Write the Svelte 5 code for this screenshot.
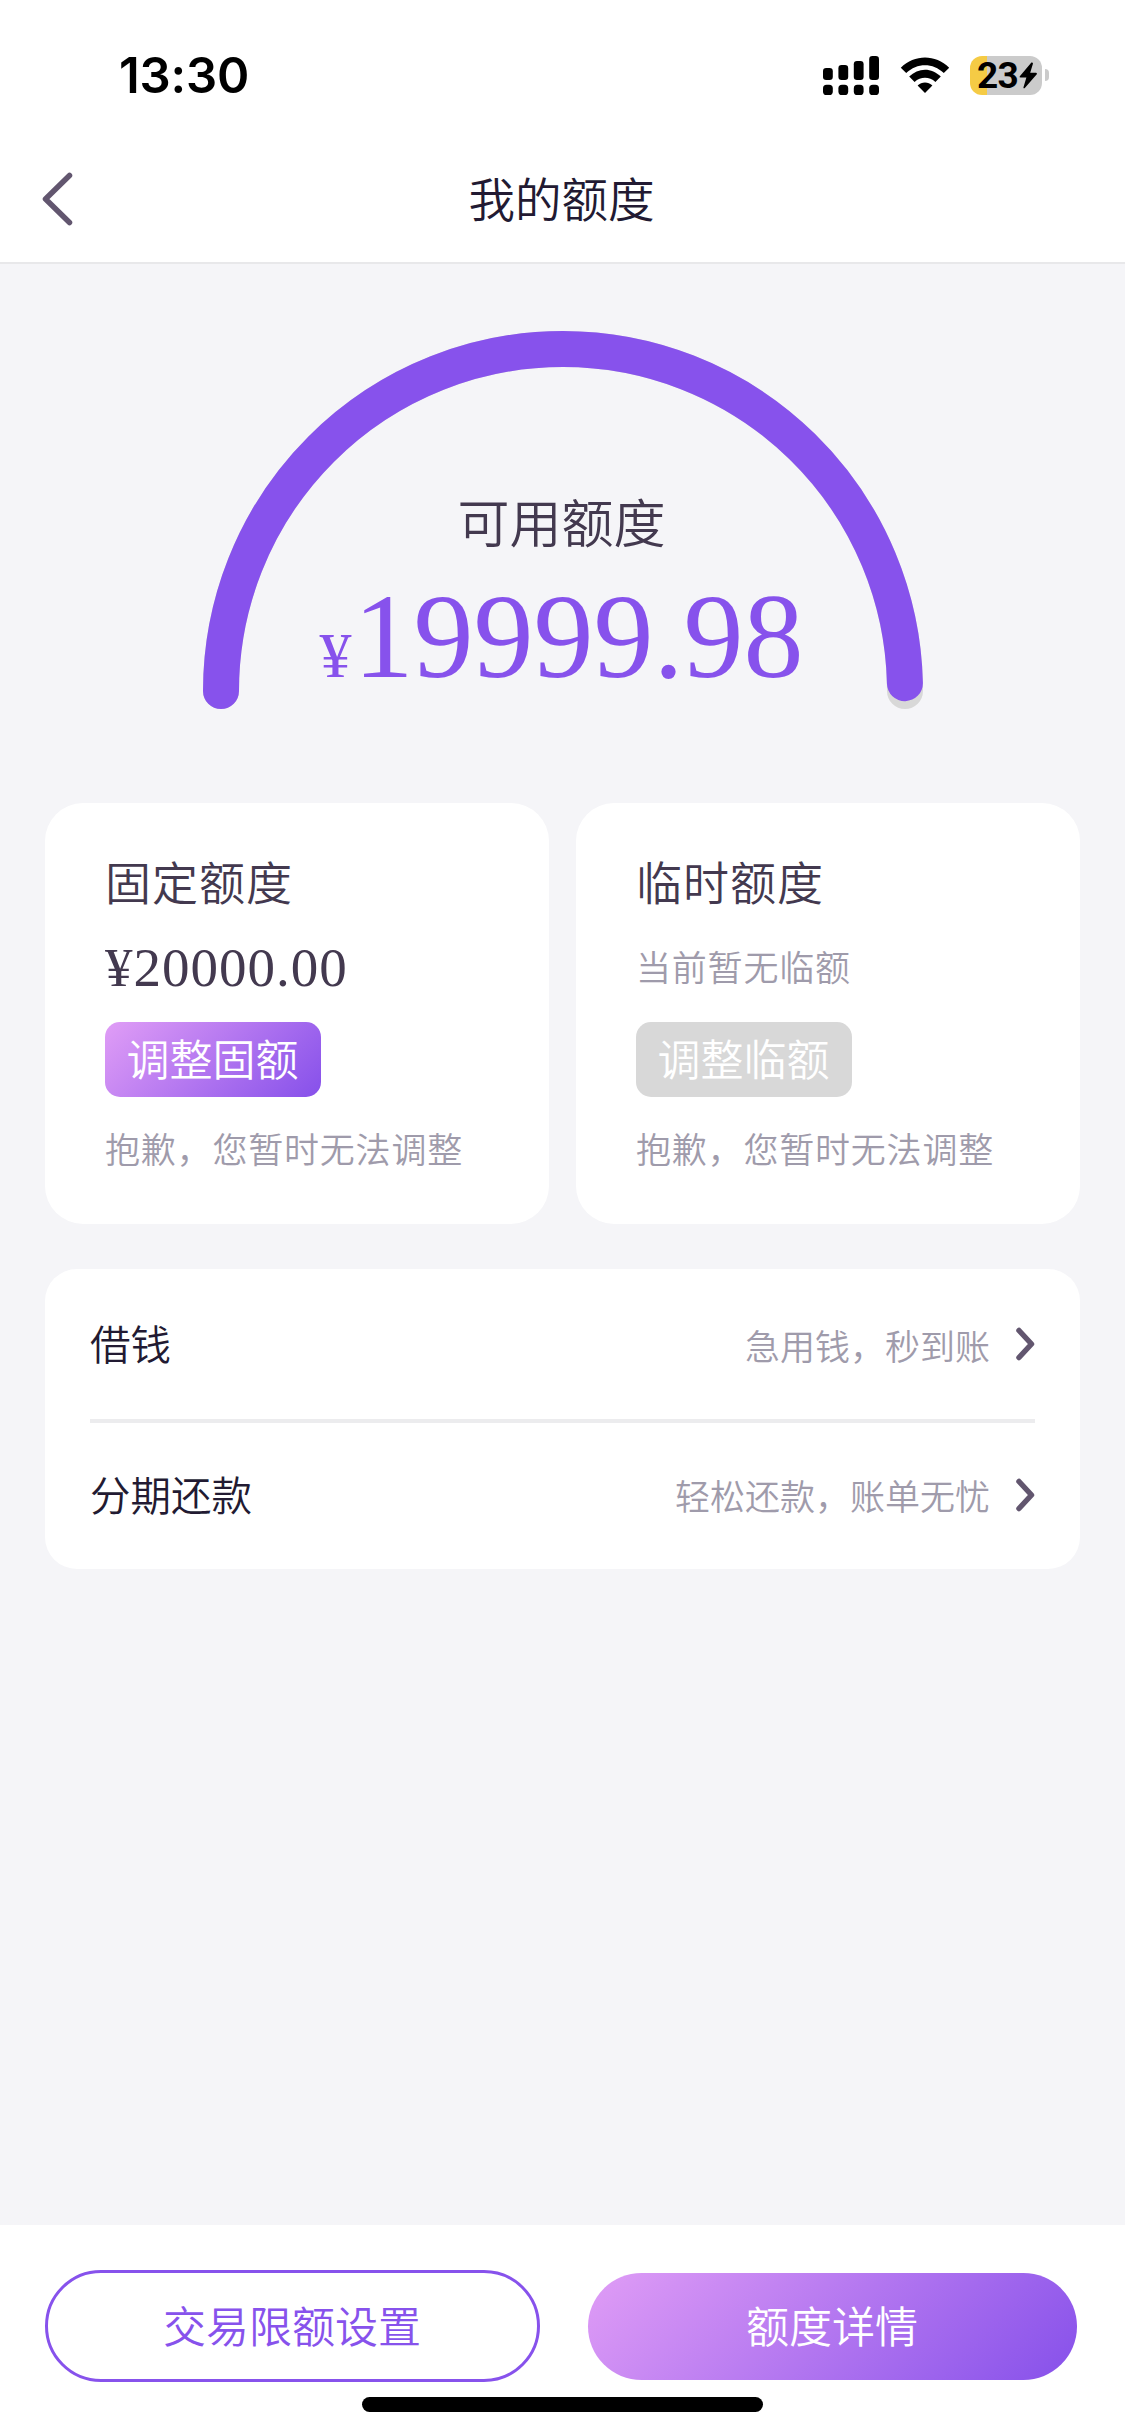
<script lang="ts">
  let available = '19999.98';
  let usedRatio = 0.9926;

  const quotas = [
    { title: '固定额度', amount: '¥20000.00', action: '调整固额', enabled: true },
    { title: '临时额度', empty: '当前暂无临额', action: '调整临额', enabled: false },
  ];

  const links = [
    { title: '借钱', hint: '急用钱，秒到账' },
    { title: '分期还款', hint: '轻松还款，账单无忧' },
  ];

  // top of each signal bar, left to right
  const bars = [12, 9, 5, 0];
</script>

<div class="page">
  <div class="status-bar">
    <span class="time">13:30</span>
    <div class="status-icons">
      <svg class="signal" width="56" height="39" viewBox="0 0 56 39">
        {#each bars as top, i}
          <rect x={i * 15.4} y={top} width="9.8" height={24 - top} rx="3.2" />
          <rect x={i * 15.4} y="28.8" width="9.8" height="10.2" rx="3.6" />
        {/each}
      </svg>
      <svg class="wifi" width="50" height="37" viewBox="0 0 50 37">
        <path d="M0.8 10.8C14.5 -2.8 35.5 -2.8 49.2 10.8L43.8 16C33 5.6 17 5.6 6.2 16Z" />
        <path d="M9.2 19.6C18.2 10.4 31.8 10.4 40.8 19.6L35.4 25C29.4 19.4 20.6 19.4 14.6 25Z" />
        <path d="M17.6 28.4C21.8 24.4 28.2 24.4 32.4 28.4L25 36Z" />
      </svg>
      <div class="battery">
        <span class="level">23</span>
        <svg width="19" height="27" viewBox="0 0 19 27">
          <path d="M12.4 0.6L0.8 14.2Q0 15.6 1.6 15.6H7.4L4.4 25.6Q4.6 27 5.8 26L17.8 12.2Q18.4 11 17 10.8H11.2L14 1.4Q13.6 0 12.4 0.6Z" />
        </svg>
      </div>
      <div class="battery-cap"></div>
    </div>
  </div>

  <header>
    <button class="back" aria-label="返回">
      <svg width="32" height="54" viewBox="0 0 32 54">
        <path d="M28.5 3.5L4.5 27L28.5 50.5" />
      </svg>
    </button>
    <h1>我的额度</h1>
  </header>

  <main>
    <section class="gauge">
      <svg width="722" height="380" viewBox="0 0 722 380">
        <path class="track" d="M19 361A342 342 0 0 1 703 361" />
        <path
          class="value"
          d="M19 361A342 342 0 0 1 703 361"
          pathLength="1"
          stroke-dasharray="{usedRatio} 2"
        />
      </svg>
      <div class="gauge-text">
        <div class="gauge-label">可用额度</div>
        <div class="gauge-amount"><small>¥</small>{available}</div>
      </div>
    </section>

    <section class="quotas">
      {#each quotas as quota}
        <div class="card">
          <h2>{quota.title}</h2>
          {#if quota.amount}
            <div class="amount">{quota.amount}</div>
          {:else}
            <div class="empty">{quota.empty}</div>
          {/if}
          <button class="adjust" class:disabled={!quota.enabled}>{quota.action}</button>
          <p>抱歉，您暂时无法调整</p>
        </div>
      {/each}
    </section>

    <section class="links">
      {#each links as link}
        <div class="link">
          <span class="link-title">{link.title}</span>
          <span class="link-hint">{link.hint}</span>
          <svg width="20" height="34" viewBox="0 0 20 34">
            <path d="M4 3.5L16.5 17L4 30.5" />
          </svg>
        </div>
      {/each}
    </section>
  </main>

  <footer>
    <div class="actions">
      <button class="outline">交易限额设置</button>
      <button class="primary">额度详情</button>
    </div>
    <div class="home-indicator"></div>
  </footer>
</div>

<style>
  :global(body) {
    margin: 0;
  }

  .page {
    display: flex;
    flex-direction: column;
    width: 1125px;
    height: 2435px;
    background: #f5f5f8;
    font-family: 'Noto Sans CJK SC', sans-serif;
    font-weight: 350;
    color: #221a32;
    overflow: hidden;
  }

  button {
    display: flex;
    align-items: center;
    justify-content: center;
    box-sizing: border-box;
    margin: 0;
    padding: 0;
    border: none;
    background: none;
    font: inherit;
    color: inherit;
  }

  h1, h2, p {
    margin: 0;
    font-weight: inherit;
  }

  .status-bar {
    display: flex;
    justify-content: space-between;
    align-items: center;
    box-sizing: border-box;
    height: 150px;
    padding: 0 76px 0 119px;
    background: #fff;
    color: #000;
  }

  .time {
    font-family: Inter, sans-serif;
    font-size: 49px;
    font-weight: 600;
    letter-spacing: -0.2px;
  }

  .status-icons {
    display: flex;
    align-items: center;
  }

  .wifi {
    margin-left: 21px;
  }

  .battery {
    display: flex;
    align-items: center;
    box-sizing: border-box;
    width: 72px;
    height: 39px;
    margin-left: 20px;
    padding-left: 7px;
    border-radius: 12px;
    background: linear-gradient(to right, #f5cb45 17px, #cbcbcb 17px);
  }

  .level {
    width: 42px;
    font-family: Roboto, sans-serif;
    font-size: 37px;
    font-weight: 700;
    line-height: 39px;
    letter-spacing: -0.8px;
  }

  .battery-cap {
    width: 4px;
    height: 12px;
    margin-left: 3px;
    border-radius: 0 5px 5px 0;
    background: #cbcbcb;
  }

  header {
    display: grid;
    grid-template-columns: 120px 1fr 120px;
    align-items: center;
    box-sizing: border-box;
    height: 114px;
    padding-bottom: 14px;
    border-bottom: 2px solid #e8e8ea;
    background: #fff;
  }

  .back {
    justify-content: flex-start;
    padding-left: 41px;
  }

  .back path,
  .link path {
    fill: none;
    stroke: #62566f;
    stroke-width: 5.5;
    stroke-linecap: round;
    stroke-linejoin: round;
  }

  h1 {
    padding: 0 2px 5px 0;
    font-size: 46.5px;
    line-height: 60px;
    text-align: center;
  }

  main {
    flex: 1;
    padding: 0 45px;
  }

  .gauge {
    display: grid;
    justify-items: center;
    height: 539px;
  }

  .gauge > * {
    grid-area: 1 / 1;
  }

  .gauge svg {
    margin-top: 66px;
  }

  .gauge path {
    fill: none;
    stroke-width: 36;
    stroke-linecap: round;
  }

  .track {
    stroke: #d8d8d8;
  }

  .value {
    stroke: #8752ec;
  }

  .gauge-text {
    padding: 222px 2px 0 0;
    text-align: center;
  }

  .gauge-label {
    font-size: 52px;
    line-height: 70px;
    color: #43394f;
  }

  .gauge-amount {
    margin-top: 21px;
    font-family: 'Liberation Serif', serif;
    font-size: 120px;
    font-weight: 400;
    line-height: 120px;
    color: #8752ec;
  }

  .gauge-amount small {
    margin-right: 2px;
    font-size: 64px;
  }

  .quotas {
    display: flex;
    gap: 27px;
  }

  .card {
    flex: 1;
    box-sizing: border-box;
    height: 421px;
    padding: 45px 60px 0;
    border-radius: 38px;
    background: #fff;
    color: #43394f;
  }

  h2 {
    height: 64px;
    font-size: 46px;
    line-height: 64px;
    letter-spacing: 1px;
  }

  .amount,
  .empty {
    height: 70px;
    margin: 21px 0 19px;
    line-height: 70px;
  }

  .amount {
    font-family: 'Liberation Serif', serif;
    font-size: 55px;
    font-weight: 400;
    letter-spacing: 1px;
  }

  .empty {
    line-height: 66px;
  }

  .empty,
  p {
    font-size: 35px;
    letter-spacing: 0.8px;
    color: #9f9bab;
  }

  .adjust {
    width: 216px;
    height: 75px;
    padding: 0 1px 5px 0;
    border-radius: 15px;
    background: linear-gradient(135deg, #e09df6, #8650ea);
    font-size: 43px;
    color: #fff;
  }

  .adjust.disabled {
    background: #d8d8d8;
  }

  p {
    margin-top: 26px;
    line-height: 50px;
    white-space: nowrap;
  }

  .links {
    margin-top: 45px;
    padding: 0 45px;
    border-radius: 32px;
    background: #fff;
  }

  .link {
    display: flex;
    align-items: center;
    height: 150px;
  }

  .link + .link {
    box-sizing: border-box;
    padding-bottom: 3px;
    border-top: 4px solid #ececee;
  }

  .link-title {
    flex: 1;
    padding-bottom: 3px;
    font-size: 40.5px;
  }

  .link-hint {
    margin-right: 25px;
    font-size: 35px;
    color: #9f9bab;
  }

  footer {
    display: flex;
    flex-direction: column;
    align-items: center;
    box-sizing: border-box;
    height: 210px;
    padding: 45px 45px 0;
    background: #fff;
  }

  .actions {
    display: flex;
    justify-content: space-between;
    align-items: center;
    box-sizing: border-box;
    width: 100%;
    padding-right: 3px;
    font-size: 43px;
  }

  .outline,
  .primary {
    padding: 0 1px 4px 0;
  }

  .outline {
    width: 495px;
    height: 112px;
    border: 3px solid #8752ec;
    border-radius: 57px;
    color: #8752ec;
  }

  .primary {
    width: 489px;
    height: 107px;
    border-radius: 54px;
    background: linear-gradient(135deg, #e09df6, #8650ea);
    color: #fff;
  }

  .home-indicator {
    width: 401px;
    height: 15px;
    margin-top: 15px;
    border-radius: 8px;
    background: #000;
  }
</style>
